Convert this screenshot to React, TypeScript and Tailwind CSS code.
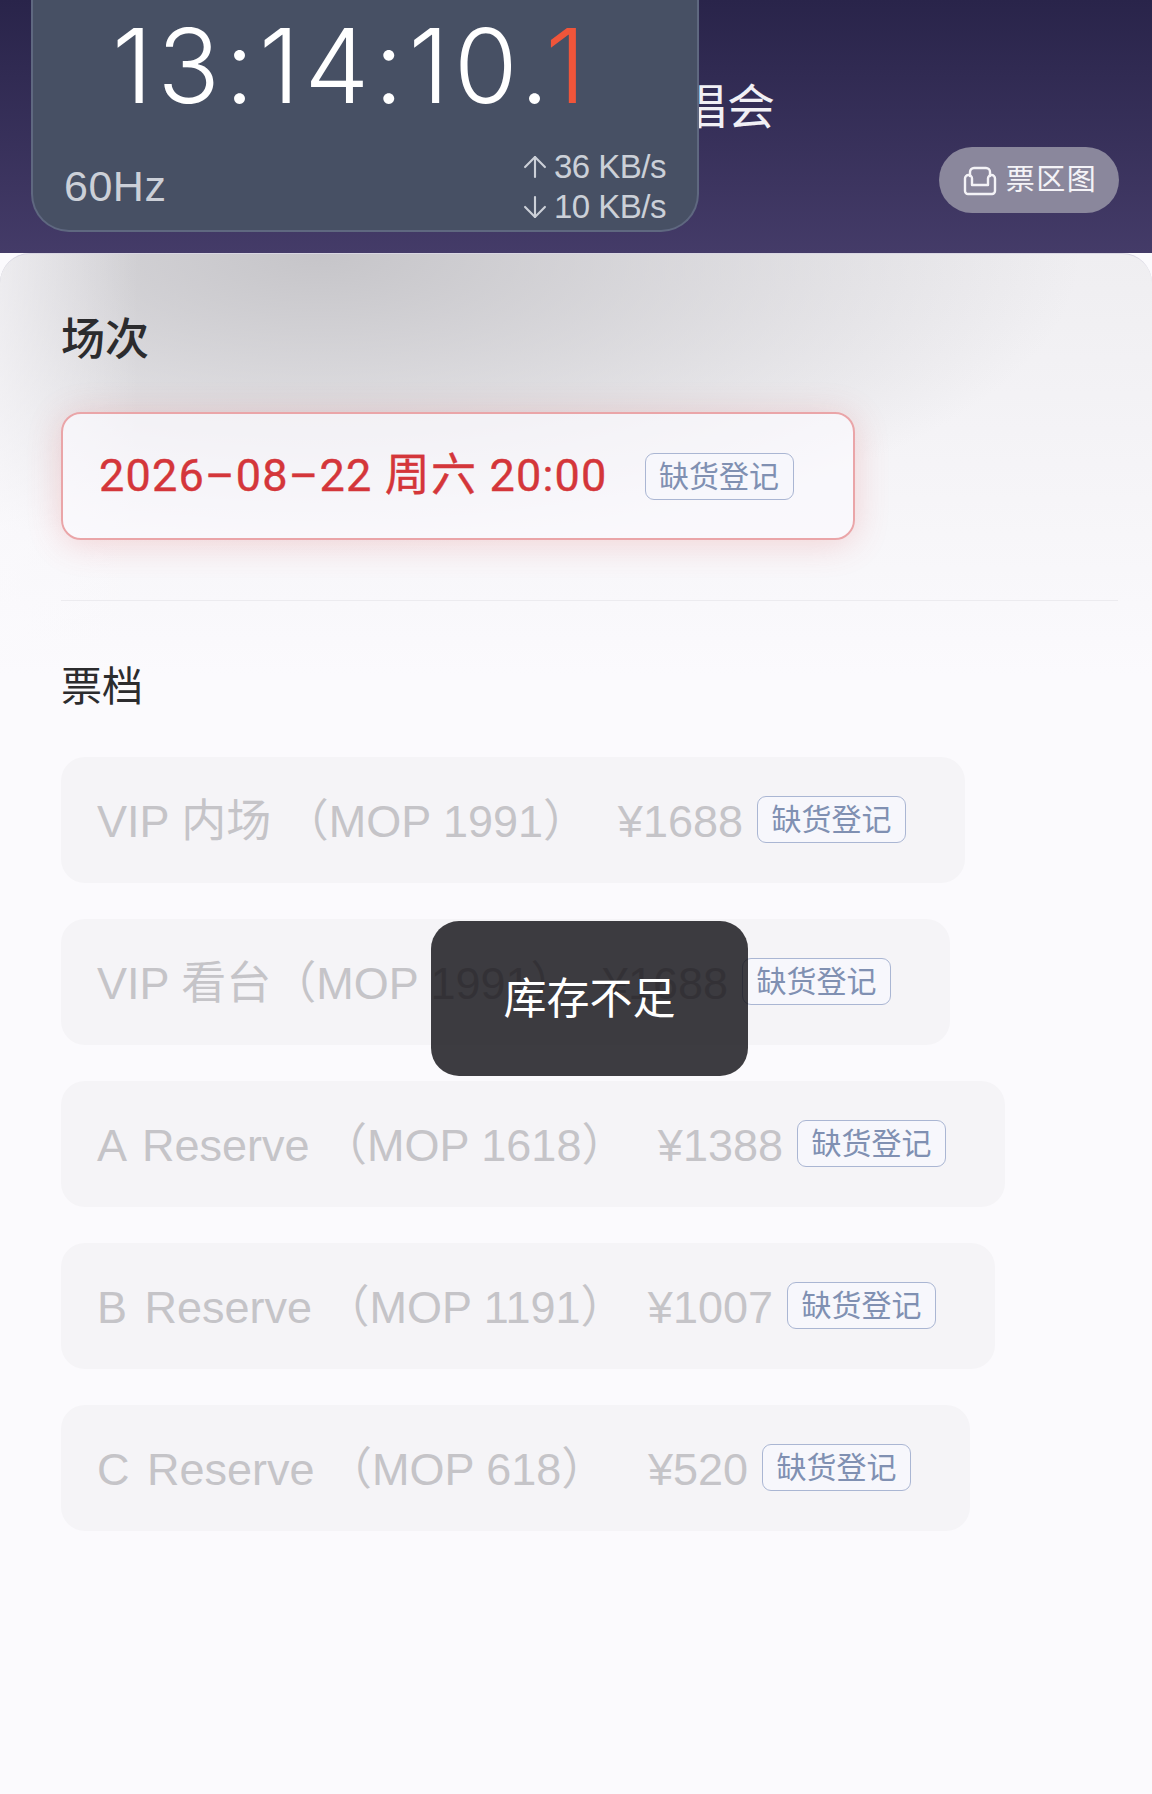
import { ArrowDown, ArrowUp } from "lucide-react";

const cjk = "font-['Liberation_Sans','Noto_Sans_CJK_SC',sans-serif]";

const tiers = [
  { lead: "VIP 内场", rest: " （MOP 1991）", price: "¥1688", width: "w-[904px]" },
  { lead: "VIP 看台", rest: "（MOP 1991）", price: "¥1688", width: "w-[889px]" },
  { lead: "A Reserve", rest: " （MOP 1618）", price: "¥1388", width: "w-[944px]", wide: true },
  { lead: "B Reserve", rest: " （MOP 1191）", price: "¥1007", width: "w-[934px]", wide: true },
  { lead: "C Reserve", rest: " （MOP 618）", price: "¥520", width: "w-[909px]", wide: true },
];

function Badge() {
  return (
    <span className="flex h-[47px] w-[149px] shrink-0 items-center justify-center rounded-[9px] border border-[#aab6d3] bg-[#f7f7fc] text-[30px] font-normal text-[#8090b2]">
      缺货登记
    </span>
  );
}

function SeatIcon() {
  return (
    <svg width="34" height="30" viewBox="0 0 34 30" fill="none" stroke="#f4f3f7" strokeWidth="2.4" strokeLinejoin="round" strokeLinecap="round">
      <path d="M7 10V6a4 4 0 0 1 4-4h12a4 4 0 0 1 4 4v4" />
      <path d="M2 12.5a3.500 3.500 0 0 1 7 0V19h16v-6.500a3.500 3.500 0 0 1 7 0V25a3 3 0 0 1-3 3H5a3 3 0 0 1-3-3z" />
    </svg>
  );
}

export default function App() {
  return (
    <div className={`relative flex h-[1794px] w-[1152px] flex-col overflow-hidden bg-[#fbfafd] ${cjk}`}>
      <header className="flex h-[253px] shrink-0 flex-col items-end bg-gradient-to-b from-[#29244a] to-[#443b68] pr-[33px]">
        <h1 className="mr-[344px] mt-[79px] text-[48px] leading-[58px] text-[#f1f0f5]">演唱会</h1>
        <button className="mt-[10px] flex h-[66px] w-[180px] items-center justify-center gap-[9px] rounded-full bg-[#8a879c] pl-[2px] pt-[2px] text-[29px] tracking-[1.500px] text-[#f4f3f7]">
          <SeatIcon />
          票区图
        </button>
      </header>

      {/* floating clock */}
      <div className="absolute left-[31px] top-[-20px] z-10 h-[252px] w-[668px] rounded-b-[38px] border-2 border-t-0 border-[#5f6880] bg-[#475064]">
        <div className="ml-[79px] mt-[24px] font-['Inter',sans-serif] text-[103px] font-light leading-[124px] tracking-[5px] text-white">
          13:14:10.<span className="text-[#f0553a]">1</span>
        </div>
        <div className="mt-[19px] flex items-end justify-between pl-[31px] pr-[31px] text-[#ccd0d8]">
          <span className="mb-[1px] text-[43px] leading-[46px] tracking-[0.5px]">60Hz</span>
          <div className="mb-[-17px] flex flex-col text-[33px] leading-[40px] tracking-[-0.5px]">
            <span className="flex items-center gap-[2px]">
              <ArrowUp size={34} strokeWidth={1.5} />
              36 KB/s
            </span>
            <span className="flex items-center gap-[2px]">
              <ArrowDown size={34} strokeWidth={1.5} />
              10 KB/s
            </span>
          </div>
        </div>
      </div>

      <main className="flex-1 rounded-t-[30px] border-t border-[#d8d6e2] bg-[linear-gradient(to_right,rgba(251,250,253,0.6),rgba(251,250,253,0)_12%),radial-gradient(ellipse_760px_300px_at_320px_0px,#c6c5c9_0%,rgba(198,197,201,0.6)_40%,rgba(198,197,201,0)_100%),linear-gradient(to_bottom,#efeef1_0px,#fbfafd_420px)] px-[61px]">
        <h2 className="mt-[56px] text-[44px] font-medium leading-[60px] text-[#2c2c2e]">场次</h2>
        <div className="mt-[42px] flex h-[128px] w-[794px] items-center rounded-[20px] border-2 border-[#eaa5a8] bg-[#fbfafd]/70 pl-[36px] font-['Roboto','Noto_Sans_CJK_SC',sans-serif] shadow-[0_4px_34px_rgba(226,80,80,0.22)]">
          <span className="text-[45px] font-normal tracking-[1.200px] text-[#d4363a] [-webkit-text-stroke:0.4px_#d4363a]">2026–08–22 周六 20:00</span>
          <span className="ml-[37px]">
            <Badge />
          </span>
        </div>
        <div className="mt-[60px] h-px w-[1057px] bg-[#ecebef]" />
        <h2 className="mt-[56px] text-[41px] leading-[60px] text-[#2c2c2e]">票档</h2>
        <div className="mt-[40px] flex flex-col gap-[36px]">
          {tiers.map((tier) => (
            <div
              key={tier.lead}
              className={`flex h-[126px] items-center rounded-[24px] bg-[#f5f4f7] pl-[36px] pr-[59px] text-[45px] text-[#c5c4c8] ${tier.width}`}
            >
              <span className="mt-[4px] whitespace-pre">
                <span className={tier.wide ? "[word-spacing:5px]" : ""}>{tier.lead}</span>
                {tier.rest}
              </span>
              <span className="ml-auto mr-[14px] mt-[4px]">{tier.price}</span>
              <span className="mb-[2px]">
                <Badge />
              </span>
            </div>
          ))}
        </div>
      </main>

      {/* toast */}
      <div className="absolute left-[431px] top-[921px] z-20 flex h-[155px] w-[317px] items-center justify-center rounded-[28px] bg-[#0e0c12]/80 pt-[2px] text-[43px] text-white">
        库存不足
      </div>
    </div>
  );
}
